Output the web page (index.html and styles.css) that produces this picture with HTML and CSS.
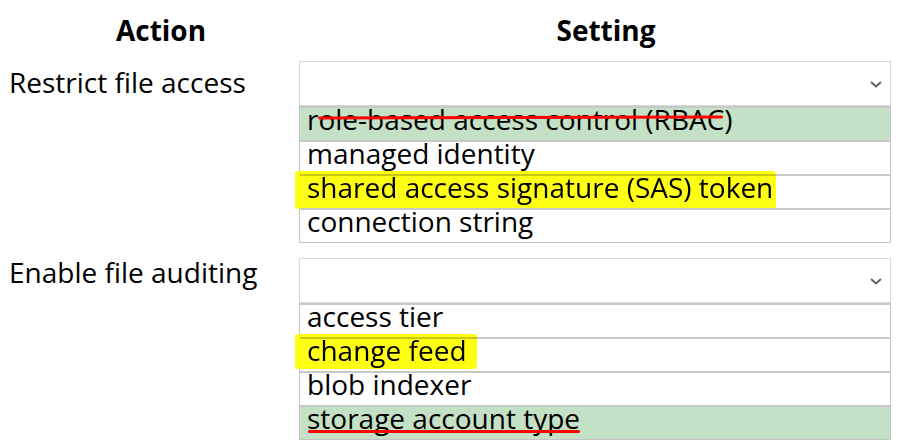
FILE: index.html
```html
<!DOCTYPE html>
<html lang="en">
<head>
  <meta charset="UTF-8" />
  <title>Action / Setting</title>
  <link rel="stylesheet" href="styles.css">
</head>
<body>

  <!-- Column headers -->
  <div class="head">
    <div class="head-action">Action</div>
    <div class="head-setting">Setting</div>
  </div>

  <!-- Restrict file access -->
  <div class="item">
    <div class="label">Restrict file access</div>
    <div class="picker">
      <div class="select">
        <svg class="chevron" width="12" height="7" viewBox="0 0 12 7"><path d="M1 1 L6 5.5 L11 1" fill="none" stroke="#606060" stroke-width="2"/></svg>
      </div>
      <ul class="options">
        <li class="correct"><span class="struck">role-based access control (RBAC)</span></li>
        <li>managed identity</li>
        <li><span class="marked">shared access signature (SAS) token</span></li>
        <li>connection string</li>
      </ul>
    </div>
  </div>

  <!-- Enable file auditing -->
  <div class="item item-audit">
    <div class="label">Enable file auditing</div>
    <div class="picker">
      <div class="select">
        <svg class="chevron" width="12" height="7" viewBox="0 0 12 7"><path d="M1 1 L6 5.5 L11 1" fill="none" stroke="#606060" stroke-width="2"/></svg>
      </div>
      <ul class="options">
        <li>access tier</li>
        <li><span class="marked short">change feed</span></li>
        <li>blob indexer</li>
        <li class="correct"><span class="underlined">storage account type</span></li>
      </ul>
    </div>
  </div>

</body>
</html>
```

FILE: styles.css
```css
html, body {
  margin: 0; padding: 0;
  background: #fff;
  color: #000;
  font-family: "Open Sans", "Noto Sans", sans-serif;
}
.head {
  display: flex;
  height: 61px;
  font-weight: bold;
  font-size: 28px;
  line-height: 61px;
}
.head-action {
  width: 322px;
  text-align: center;
}
.head-setting {
  width: 568px;
  text-align: center;
}
.item {
  display: flex;
  margin-bottom: 15px;
}
.label {
  width: 299px;
  padding-left: 9px;
  box-sizing: border-box;
  font-size: 28px;
  line-height: 42px;
}
.item-audit .label {
  line-height: 28px;
}
.picker {
  width: 592px;
}
.select {
  height: 43px;
  border: 1px solid #d8d8d8;
  display: flex;
  align-items: center;
  justify-content: flex-end;
  padding-right: 8px;
}
.chevron {
  margin-top: 2px;
}
.options {
  list-style: none;
  margin: 0; padding: 0;
  border: 1px solid #c4c4c4;
  border-top: none;
  font-size: 28px;
}
.options li {
  position: relative;
  z-index: 0;
  height: 32px;
  line-height: 22px;
  padding-left: 7px;
  border-top: 2px solid #c8c8c8;
  white-space: nowrap;
}
.options li.correct {
  background: #c5e1c5;
}
.marked, .struck, .underlined {
  position: relative;
}
.marked::before {
  content: "";
  position: absolute;
  left: -12px; right: -3px;
  top: 3px; bottom: -3px;
  background: #ffff14;
  border-radius: 3px;
  mix-blend-mode: multiply;
  z-index: -1;
}
.marked.short::before {
  right: -10px;
  bottom: 0;
}
.struck::after {
  content: "";
  position: absolute;
  left: 11px; right: 10px;
  top: 16px;
  height: 3px;
  background: #f00;
  border-radius: 2px;
  transform: rotate(-0.15deg);
}
.underlined::after {
  content: "";
  position: absolute;
  left: 1px; right: 0;
  bottom: 4px;
  height: 3px;
  background: #f00;
  border-radius: 2px;
}
```
